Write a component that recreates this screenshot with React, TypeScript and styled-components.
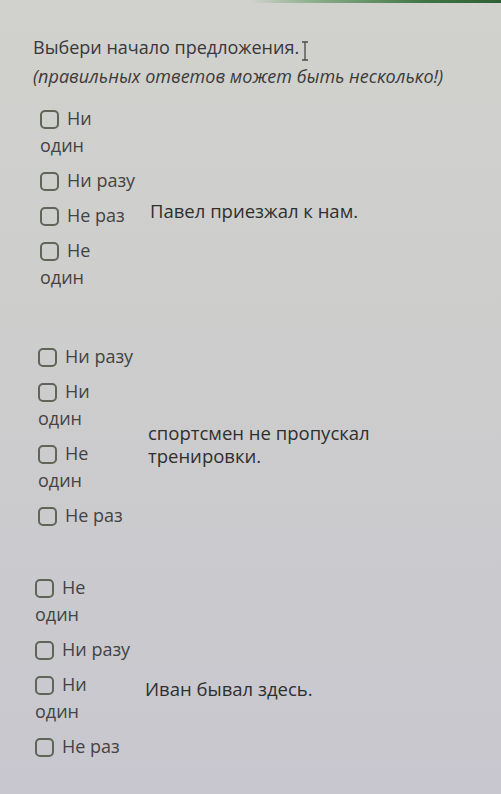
import React from "react";
import styled, { createGlobalStyle } from "styled-components";

const Global = createGlobalStyle`
  html, body { margin: 0; padding: 0; }
  body {
    background: linear-gradient(180deg, #d1d1cd 0%, #cdcdcd 45%, #c8c7cf 100%);
    min-height: 794px;
    font-family: "Open Sans", "Noto Sans", sans-serif;
  }
`;

const Page = styled.div`
  width: 501px;
  min-height: 794px;
  box-sizing: border-box;
  overflow: hidden;
`;

const TopBar = styled.div`
  height: 3px;
  background: linear-gradient(90deg, rgba(60,110,60,0) 0%, rgba(60,110,60,0) 50%, #8fb08c 62%, #3f7444 85%, #2f6035 100%);
`;

const Content = styled.div`
  padding: 30px 0 0 33px;
`;

const Title = styled.div`
  font-size: 18px;
  line-height: 29px;
  color: #383838;
  display: flex;
  align-items: center;
`;

const Cursor = styled.svg`
  margin-left: 2px;
  margin-top: 6px;
`;

const Hint = styled.div`
  font-size: 18px;
  line-height: 29px;
  font-style: italic;
  color: #3b3b3b;
  white-space: nowrap;
`;

const Group = styled.div<{ $indent: number; $shift: number; $gap: number }>`
  display: grid;
  grid-template-columns: 110px 280px;
  align-items: center;
  margin-top: ${(p) => p.$gap}px;
  padding-left: ${(p) => p.$indent}px;
  & > :last-child { margin-top: ${(p) => p.$shift}px; }
`;

const Options = styled.div`
  display: flex;
  flex-direction: column;
  gap: 8px;
`;

const Option = styled.label`
  font-size: 18px;
  line-height: 27px;
  color: #434343;
  display: block;
  white-space: nowrap;
`;

const Box = styled.span`
  display: inline-block;
  box-sizing: border-box;
  width: 19px;
  height: 19px;
  border: 2px solid #5f6657;
  border-radius: 5px;
  vertical-align: -4px;
  margin-right: 8px;
`;

const Sentence = styled.div`
  font-size: 18.5px;
  line-height: 23px;
  color: #2f2f2f;
  font-weight: 500;
  max-width: 250px;
`;

type G = { options: string[][]; sentence: string; indent: number; shift: number; gap: number };

const groups: G[] = [
  {
    options: [["Ни", "один"], ["Ни разу"], ["Не раз"], ["Не", "один"]],
    sentence: "Павел приезжал к нам.",
    indent: 7,
    shift: 25,
    gap: 14,
  },
  {
    options: [["Ни разу"], ["Ни", "один"], ["Не", "один"], ["Не раз"]],
    sentence: "спортсмен не пропускал тренировки.",
    indent: 5,
    shift: 15,
    gap: 52,
  },
  {
    options: [["Не", "один"], ["Ни разу"], ["Ни", "один"], ["Не раз"]],
    sentence: "Иван бывал здесь.",
    indent: 2,
    shift: 42,
    gap: 45,
  },
];

export default function App() {
  return (
    <Page>
      <Global />
      <TopBar />
      <Content>
        <Title>
          Выбери начало предложения.
          <Cursor width="8" height="20" viewBox="0 0 8 20">
            <path d="M1 1h6M4 1v18M1 19h6" stroke="#4a4a4a" strokeWidth="1.3" fill="none" />
          </Cursor>
        </Title>
        <Hint>(правильных ответов может быть несколько!)</Hint>
        {groups.map((g, i) => (
          <Group key={i} $indent={g.indent} $shift={g.shift} $gap={g.gap}>
            <Options>
              {g.options.map((o, j) => (
                <Option key={j}>
                  <Box />
                  {o[0]}
                  {o[1] && (
                    <>
                      <br />
                      {o[1]}
                    </>
                  )}
                </Option>
              ))}
            </Options>
            <Sentence>{g.sentence}</Sentence>
          </Group>
        ))}
      </Content>
    </Page>
  );
}
